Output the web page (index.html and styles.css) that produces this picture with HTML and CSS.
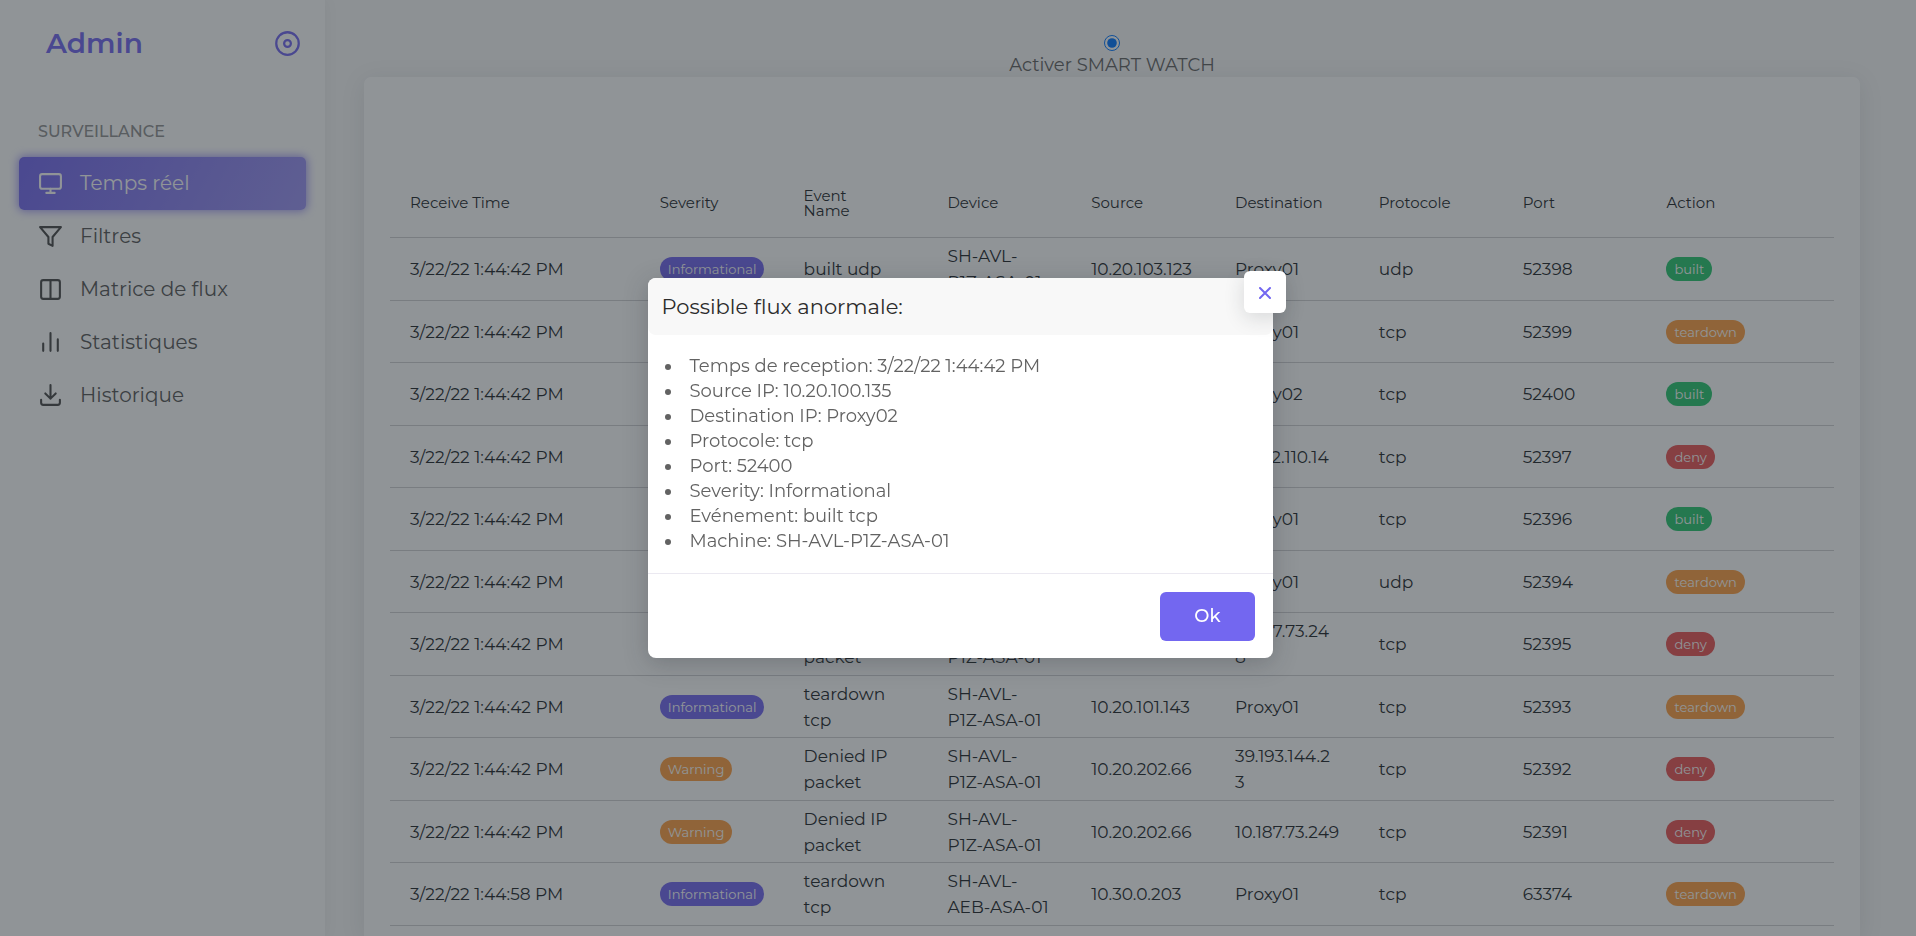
FILE: index.html
```html
<!DOCTYPE html>
<html lang="fr">
<head>
<meta charset="utf-8">
<meta name="viewport" content="width=device-width, initial-scale=1">
<title>Admin - Temps réel</title>
<link rel="stylesheet" href="styles.css">
</head>
<body>
<div class="app">
  <aside class="sidebar">
    <div class="brand">
      <a class="brand-name" href="#">Admin</a>
      <button class="brand-toggle" type="button" aria-label="Réduire le menu">
        <svg class="icon" viewBox="0 0 24 24"><circle cx="12" cy="12" r="10"/><circle cx="12" cy="12" r="3"/></svg>
      </button>
    </div>
    <nav class="menu">
      <h2 class="menu-title">SURVEILLANCE</h2>
      <a class="menu-item active" href="#"><svg class="icon" viewBox="0 0 24 24"><rect x="2" y="3" width="20" height="14" rx="2"/><path d="M8 21h8M12 17v4"/></svg>Temps réel</a>
      <a class="menu-item" href="#"><svg class="icon" viewBox="0 0 24 24"><path d="M22 3H2l8 9.46V19l4 2v-8.54z"/></svg>Filtres</a>
      <a class="menu-item" href="#"><svg class="icon" viewBox="0 0 24 24"><path d="M12 3h7a2 2 0 0 1 2 2v14a2 2 0 0 1-2 2h-7m0-18H5a2 2 0 0 0-2 2v14a2 2 0 0 0 2 2h7m0-18v18"/></svg>Matrice de flux</a>
      <a class="menu-item" href="#"><svg class="icon" viewBox="0 0 24 24"><path d="M19 20V9M12 20V3M5 20v-7"/></svg>Statistiques</a>
      <a class="menu-item" href="#"><svg class="icon" viewBox="0 0 24 24"><path d="M21 16v3a2 2 0 0 1-2 2H5a2 2 0 0 1-2-2v-3M7 10l5 5 5-5M12 15V2"/></svg>Historique</a>
    </nav>
  </aside>

  <main class="main">
    <div class="watch">
      <input class="watch-input" type="radio" id="smart-watch" checked>
      <label for="smart-watch">Activer SMART WATCH</label>
    </div>
    <section class="card">
      <table class="events">
        <colgroup><col class="col-time"><col class="col"><col class="col"><col class="col"><col class="col"><col class="col"><col class="col"><col class="col"><col></colgroup>
        <thead>
          <tr><th>Receive Time</th><th>Severity</th><th>Event<br>Name</th><th>Device</th><th>Source</th><th>Destination</th><th>Protocole</th><th>Port</th><th>Action</th></tr>
        </thead>
        <tbody>
          <tr><td>3/22/22 1:44:42 PM</td><td><span class="badge info">Informational</span></td><td>built udp</td><td>SH-AVL-<br>P1Z-ASA-01</td><td>10.20.103.123</td><td>Proxy01</td><td>udp</td><td>52398</td><td><span class="badge built">built</span></td></tr>
          <tr><td>3/22/22 1:44:42 PM</td><td><span class="badge info">Informational</span></td><td>teardown<br>tcp</td><td>SH-AVL-<br>P1Z-ASA-01</td><td>10.20.100.135</td><td>Proxy01</td><td>tcp</td><td>52399</td><td><span class="badge warn">teardown</span></td></tr>
          <tr><td>3/22/22 1:44:42 PM</td><td><span class="badge info">Informational</span></td><td>built tcp</td><td>SH-AVL-<br>P1Z-ASA-01</td><td>10.20.100.135</td><td>Proxy02</td><td>tcp</td><td>52400</td><td><span class="badge built">built</span></td></tr>
          <tr><td>3/22/22 1:44:42 PM</td><td><span class="badge warn">Warning</span></td><td>Denied IP<br>packet</td><td>SH-AVL-<br>P1Z-ASA-01</td><td>10.20.202.66</td><td>10.132.110.14</td><td>tcp</td><td>52397</td><td><span class="badge deny">deny</span></td></tr>
          <tr><td>3/22/22 1:44:42 PM</td><td><span class="badge info">Informational</span></td><td>built tcp</td><td>SH-AVL-<br>P1Z-ASA-01</td><td>10.20.101.143</td><td>Proxy01</td><td>tcp</td><td>52396</td><td><span class="badge built">built</span></td></tr>
          <tr><td>3/22/22 1:44:42 PM</td><td><span class="badge info">Informational</span></td><td>teardown<br>udp</td><td>SH-AVL-<br>P1Z-ASA-01</td><td>10.20.103.123</td><td>Proxy01</td><td>udp</td><td>52394</td><td><span class="badge warn">teardown</span></td></tr>
          <tr><td>3/22/22 1:44:42 PM</td><td><span class="badge warn">Warning</span></td><td>Denied IP<br>packet</td><td>SH-AVL-<br>P1Z-ASA-01</td><td>10.20.202.66</td><td>10.187.73.24<br>8</td><td>tcp</td><td>52395</td><td><span class="badge deny">deny</span></td></tr>
          <tr><td>3/22/22 1:44:42 PM</td><td><span class="badge info">Informational</span></td><td>teardown<br>tcp</td><td>SH-AVL-<br>P1Z-ASA-01</td><td>10.20.101.143</td><td>Proxy01</td><td>tcp</td><td>52393</td><td><span class="badge warn">teardown</span></td></tr>
          <tr><td>3/22/22 1:44:42 PM</td><td><span class="badge warn">Warning</span></td><td>Denied IP<br>packet</td><td>SH-AVL-<br>P1Z-ASA-01</td><td>10.20.202.66</td><td>39.193.144.2<br>3</td><td>tcp</td><td>52392</td><td><span class="badge deny">deny</span></td></tr>
          <tr><td>3/22/22 1:44:42 PM</td><td><span class="badge warn">Warning</span></td><td>Denied IP<br>packet</td><td>SH-AVL-<br>P1Z-ASA-01</td><td>10.20.202.66</td><td>10.187.73.249</td><td>tcp</td><td>52391</td><td><span class="badge deny">deny</span></td></tr>
          <tr><td>3/22/22 1:44:58 PM</td><td><span class="badge info">Informational</span></td><td>teardown<br>tcp</td><td>SH-AVL-<br>AEB-ASA-01</td><td>10.30.0.203</td><td>Proxy01</td><td>tcp</td><td>63374</td><td><span class="badge warn">teardown</span></td></tr>
        </tbody>
      </table>
    </section>
  </main>
</div>

<div class="backdrop">
  <div class="modal" role="dialog" aria-modal="true" aria-labelledby="modal-title">
    <header class="modal-header">
      <h1 class="modal-title" id="modal-title">Possible flux anormale:</h1>
      <button class="modal-close" type="button" aria-label="Fermer">
        <svg class="close-icon" viewBox="0 0 12 12"><path d="M1 1l10 10M11 1L1 11"/></svg>
      </button>
    </header>
    <ul class="details">
      <li>Temps de reception: 3/22/22 1:44:42 PM</li>
      <li>Source IP: 10.20.100.135</li>
      <li>Destination IP: Proxy02</li>
      <li>Protocole: tcp</li>
      <li>Port: 52400</li>
      <li>Severity: Informational</li>
      <li>Evénement: built tcp</li>
      <li>Machine: SH-AVL-P1Z-ASA-01</li>
    </ul>
    <footer class="modal-footer">
      <button class="ok" type="button">Ok</button>
    </footer>
  </div>
</div>
</body>
</html>
```
FILE: styles.css
```css
* { box-sizing: border-box; }

body {
  margin: 0;
  overflow: hidden;
  background: #f8f8f8;
  color: #626262;
  font-family: Montserrat, Inter, "Open Sans", sans-serif;
  font-size: 18px;
  line-height: 26px;
}

button { font: inherit; border: 0; cursor: pointer; }

.icon {
  width: 25px;
  height: 25px;
  flex: none;
  fill: none;
  stroke: currentColor;
  stroke-width: 2;
  stroke-linecap: round;
  stroke-linejoin: round;
}

.app { display: flex; height: 100vh; overflow: hidden; }

/* Sidebar */
.sidebar {
  flex: none;
  width: 325px;
  background: #fff;
  box-shadow: 0 0 15px rgba(34, 41, 47, 0.05);
}
.brand {
  display: flex;
  align-items: center;
  justify-content: space-between;
  padding: 25px 24px 0 46px;
}
.brand-name {
  color: #7367f0;
  font-size: 28px;
  font-weight: 600;
  line-height: 36px;
  text-decoration: none;
}
.brand-toggle {
  display: flex;
  padding: 0;
  background: none;
  color: #7367f0;
}
.brand-toggle .icon { width: 27px; height: 27px; }
.menu { padding: 58px 19px 0; }
.menu-title {
  margin: 0 0 12px;
  padding-left: 19px;
  color: #909090;
  font-size: 16px;
  font-weight: 500;
  line-height: 26px;
}
.menu-item {
  display: flex;
  align-items: center;
  gap: 17px;
  height: 53px;
  padding: 0 19px 1px;
  border-radius: 5px;
  color: #565656;
  font-size: 20px;
  text-decoration: none;
}
.menu-item .icon { color: #484848; }
.menu-item.active,
.menu-item.active .icon { color: #fff; }
.menu-item.active {
  background: linear-gradient(118deg, #7367f0, rgba(115, 103, 240, 0.7));
  box-shadow: 0 0 10px 1px rgba(115, 103, 240, 0.7);
}

/* Content */
.main {
  display: flex;
  flex: 1;
  flex-direction: column;
  min-width: 0;
  padding: 35px 56px 0 39px;
}
.watch {
  display: flex;
  flex-direction: column;
  align-items: center;
  gap: 2px;
  line-height: 24px;
}
.watch-input {
  width: 16px;
  height: 16px;
  margin: 0;
  accent-color: #0075ff;
}
.card {
  flex: 1;
  padding: 92px 26px 0;
  border-radius: 7px 7px 0 0;
  background: #fff;
  box-shadow: 0 4px 24px rgba(34, 41, 47, 0.1);
}
.events {
  width: 100%;
  border-collapse: separate;
  border-spacing: 0;
  table-layout: fixed;
  color: #212529;
  font-size: 17px;
}
.col-time { width: 17.3%; }
.col { width: 9.96%; }
.events th,
.events td {
  padding: 0 0 0 20px;
  border-bottom: 1px solid #d0d0d3;
  text-align: left;
  vertical-align: middle;
  white-space: nowrap;
}
.events th {
  height: 69px;
  padding-bottom: 1px;
  font-size: 15px;
  font-weight: 400;
  line-height: 15px;
}
.events td { height: 63px; }
.events tr:nth-child(even) td { height: 62px; }

.badge {
  display: block;
  width: fit-content;
  padding: 0 8px;
  border-radius: 12px;
  color: #fff;
  font-size: 13px;
  line-height: 24px;
}
.info { background: #7367f0; }
.built { background: #28c76f; }
.warn { background: #ff9f43; }
.deny { background: #ea5455; }

/* Modal */
.backdrop {
  position: fixed;
  inset: 0;
  display: flex;
  align-items: center;
  justify-content: center;
  padding-left: 4px;
  background: rgba(34, 41, 47, 0.5);
}
.modal {
  width: 625px;
  border-radius: 8px;
  background: #fff;
  box-shadow: 0 5px 25px rgba(34, 41, 47, 0.25);
}
.modal-header {
  position: relative;
  padding: 14px;
  border-radius: 8px;
  background: #f8f8f8;
}
.modal-title {
  margin: 0;
  color: #2c2c2c;
  font-size: 21px;
  font-weight: 400;
  line-height: 29px;
}
.modal-close {
  position: absolute;
  top: -7px;
  right: -13px;
  display: flex;
  align-items: center;
  justify-content: center;
  width: 42px;
  height: 42px;
  padding: 2px 0 0;
  border-radius: 6px;
  background: #fff;
  box-shadow: 0 5px 20px rgba(34, 41, 47, 0.15);
}
.close-icon {
  width: 12px;
  height: 12px;
  fill: none;
  stroke: #7367f0;
  stroke-width: 2;
  stroke-linecap: round;
}
.details {
  display: grid;
  grid-auto-rows: 25px;
  margin: 0;
  padding: 19px 17px;
  border-bottom: 1px solid #ebe9f1;
  list-style: none;
  line-height: 25px;
}
.details li {
  display: flex;
  align-items: center;
  gap: 19px;
}
.details li::before {
  width: 6px;
  height: 6px;
  border-radius: 50%;
  background: currentColor;
  content: "";
}
.modal-footer {
  display: flex;
  justify-content: flex-end;
  padding: 18px 18px 17px;
}
.ok {
  padding: 0 34px;
  border-radius: 6px;
  background: #7367f0;
  color: #fff;
  font-size: 18px;
  font-weight: 500;
  line-height: 49px;
}
```
